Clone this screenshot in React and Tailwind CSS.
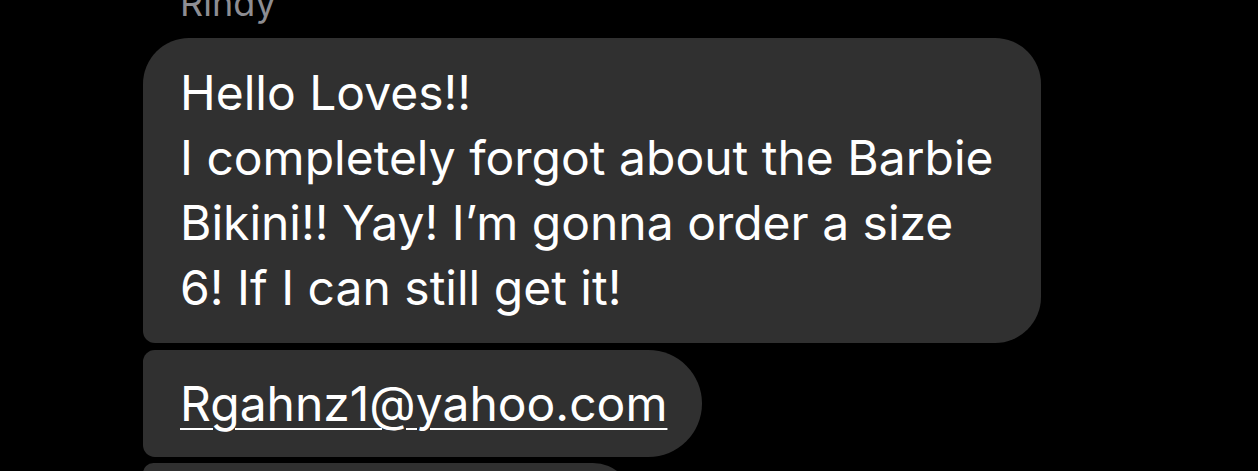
import React from "react";

const bubble = "bg-[#303030] text-white text-[48px] leading-[65px]";

export default function App() {
  return (
    <div
      className="h-[471px] w-[1258px] overflow-hidden bg-black pl-[143px]"
      style={{ fontFamily: "Inter, 'Liberation Sans', sans-serif" }}
    >
      <div className="mt-[-16px] mb-[16px] h-[38px] pl-[37px] text-[36px] leading-[38px] text-[#8d8d92]">
        Rindy
      </div>

      <div className="flex flex-col gap-[7px]">
        {/* main message */}
        <div
          className={`${bubble} w-[898px] rounded-[46px] rounded-bl-[12px] px-[37px] pt-[22px] pb-[23px]`}
        >
          Hello Loves!!
          <br />
          I completely forgot about the Barbie
          <br />
          Bikini!! Yay! I’m gonna order a size
          <br />
          6! If I can still get it!
        </div>

        {/* email */}
        <div
          className={`${bubble} w-[559px] rounded-[54px] rounded-tl-[12px] rounded-bl-[12px] px-[37px] py-[21px]`}
        >
          <span className="underline decoration-[2px] underline-offset-[7px]">
            Rgahnz1@yahoo.com
          </span>
        </div>

        {/* next message, cut off */}
        <div className="mt-[-1px] h-[80px] w-[490px] rounded-[46px] rounded-tl-[12px] bg-[#303030]" />
      </div>
    </div>
  );
}
